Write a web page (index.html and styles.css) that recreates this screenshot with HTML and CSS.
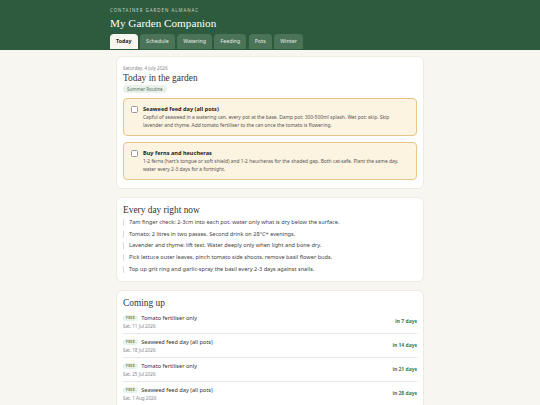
FILE: index.html
```html
<!DOCTYPE html>
<html lang="en">
<head>
<meta charset="utf-8">
<title>My Garden Companion</title>
<link rel="stylesheet" href="styles.css">
</head>
<body>
<header class="top">
  <div class="wrap">
    <div class="eyebrow">CONTAINER GARDEN ALMANAC</div>
    <h1 class="title">My Garden Companion</h1>
    <nav class="tabs">
      <span class="tab active">Today</span>
      <span class="tab">Schedule</span>
      <span class="tab">Watering</span>
      <span class="tab">Feeding</span>
      <span class="tab">Pots</span>
      <span class="tab">Winter</span>
    </nav>
  </div>
</header>
<main class="wrap main">
  <section class="card">
    <div class="date">Saturday, 4 July 2026</div>
    <h2 class="card-title">Today in the garden</h2>
    <div class="pill-row"><span class="pill">Summer Routine</span></div>
    <div class="task">
      <span class="check"></span>
      <div class="task-body">
        <div class="task-title">Seaweed feed day (all pots)</div>
        <div class="task-desc">Capful of seaweed in a watering can, every pot at the base. Damp pot: 300-500ml splash. Wet pot: skip. Skip lavender and thyme. Add tomato fertiliser to the can once the tomato is flowering.</div>
      </div>
    </div>
    <div class="task">
      <span class="check"></span>
      <div class="task-body">
        <div class="task-title">Buy ferns and heucheras</div>
        <div class="task-desc">1-2 ferns (hart's tongue or soft shield) and 1-2 heucheras for the shaded gap. Both cat-safe. Plant the same day, water every 2-3 days for a fortnight.</div>
      </div>
    </div>
  </section>
  <section class="card">
    <h2 class="card-title">Every day right now</h2>
    <ul class="daily">
      <li>7am finger check: 2-3cm into each pot, water only what is dry below the surface.</li>
      <li>Tomato: 2 litres in two passes. Second drink on 28°C+ evenings.</li>
      <li>Lavender and thyme: lift test. Water deeply only when light and bone dry.</li>
      <li>Pick lettuce outer leaves, pinch tomato side shoots, remove basil flower buds.</li>
      <li>Top up grit ring and garlic-spray the basil every 2-3 days against snails.</li>
    </ul>
  </section>
  <section class="card">
    <h2 class="card-title">Coming up</h2>
    <div class="row">
      <div class="row-main">
        <div class="row-name"><span class="tag">FEED</span>Tomato fertiliser only</div>
        <div class="row-date">Sat, 11 Jul 2026</div>
      </div>
      <div class="row-when">in 7 days</div>
    </div>
    <div class="row">
      <div class="row-main">
        <div class="row-name"><span class="tag">FEED</span>Seaweed feed day (all pots)</div>
        <div class="row-date">Sat, 18 Jul 2026</div>
      </div>
      <div class="row-when">in 14 days</div>
    </div>
    <div class="row">
      <div class="row-main">
        <div class="row-name"><span class="tag">FEED</span>Tomato fertiliser only</div>
        <div class="row-date">Sat, 25 Jul 2026</div>
      </div>
      <div class="row-when">in 21 days</div>
    </div>
    <div class="row">
      <div class="row-main">
        <div class="row-name"><span class="tag">FEED</span>Seaweed feed day (all pots)</div>
        <div class="row-date">Sat, 1 Aug 2026</div>
      </div>
      <div class="row-when">in 28 days</div>
    </div>
  </section>
</main>
</body>
</html>
```

FILE: styles.css
```css
* { box-sizing: border-box; }
html, body { margin: 0; padding: 0; }
body {
  background: #f8f6f1;
  font-family: "Noto Sans", "Open Sans", sans-serif;
  font-size: 5px;
  line-height: 7px;
  color: #333;
}
.wrap { width: 320px; margin: 0 auto; }
.top { background: #2e5b3e; height: 50px; overflow: hidden; }
.top .wrap { padding-top: 8px; }
.eyebrow {
  font-size: 4.4px;
  letter-spacing: 1px;
  color: #c3d6c8;
  line-height: 5px;
}
.title {
  font-family: "Liberation Serif", "DejaVu Serif", serif;
  font-weight: normal;
  font-size: 11.2px;
  color: #fff;
  margin: 2px 0 0;
  line-height: 16px;
}
.tabs { display: flex; gap: 2.5px; margin-top: 3px; }
.tab {
  font-size: 5.3px;
  height: 15px;
  line-height: 15px;
  padding: 0 6px;
  background: #4a7357;
  color: #e4ece6;
  border-radius: 4px 4px 0 0;
}
.tab.active { background: #f8f6f1; color: #222; font-weight: 700; }
.main { padding: 6px 6px 0; display: flex; flex-direction: column; gap: 8px; }
.card {
  background: #fff;
  border: 1px solid #efebe3;
  border-radius: 6px;
  padding: 7px 6px 8px;
}
.date { font-size: 4.6px; color: #888; line-height: 6px; margin-top: 1px; }
.card-title {
  font-family: "Liberation Serif", "DejaVu Serif", serif;
  font-weight: normal;
  font-size: 9.4px;
  line-height: 10px;
  color: #333;
  margin: 0 0 2px;
}
.date + .card-title { margin-top: 2px; }
.pill-row { display: flex; margin-top: 1px; }
.pill {
  font-size: 4.5px;
  line-height: 8px;
  padding: 0 4px;
  background: #e8f2ea;
  color: #5a7262;
  border-radius: 4px;
}
.task {
  display: flex;
  gap: 5px;
  background: #fdf3e1;
  border: 1px solid #e8c686;
  border-radius: 4px;
  padding: 6px 7px 6px 7px;
  margin-top: 5px;
}
.task + .task { margin-top: 6px; }
.check {
  flex: none;
  width: 7px; height: 7px;
  background: #fff;
  border: 1px solid #999;
  border-radius: 1.5px;
  margin-top: 1px;
}
.task-title { font-size: 5.6px; font-weight: 700; color: #222; line-height: 8px; }
.task-desc { font-size: 4.9px; color: #555; line-height: 8px; }
.daily { list-style: none; margin: 4px 0 0; padding: 0; }
.daily li {
  font-size: 5.6px;
  color: #444;
  line-height: 7px;
  border-left: 1px solid #ddd;
  padding-left: 5px;
  margin-bottom: 4.7px;
}
.daily li:last-child { margin-bottom: 0; }
.row {
  display: flex;
  align-items: center;
  justify-content: space-between;
  padding: 4px 0 4px;
  border-bottom: 1px solid #ece9e2;
}
.row:first-of-type { margin-top: 2px; }
.row-name { font-size: 5.6px; color: #333; line-height: 8px; display: flex; align-items: center; }
.tag {
  font-size: 3.2px;
  font-weight: 700;
  letter-spacing: 0.4px;
  color: #5c7a64;
  background: #e6f2ea;
  border-radius: 3px;
  padding: 0 3px;
  line-height: 6px;
  margin-right: 3px;
}
.row-date { font-size: 4.6px; color: #888; line-height: 6px; margin-top: 1px; }
.row-when { font-size: 5px; font-weight: 700; color: #3e7a50; }
```
